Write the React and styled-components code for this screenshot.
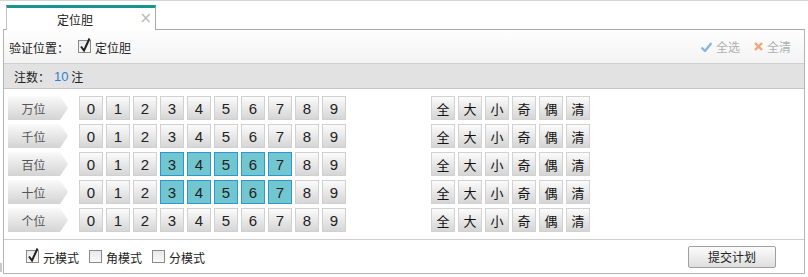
import styled, { createGlobalStyle } from "styled-components";

const GlobalStyle = createGlobalStyle`
  body {
    margin: 0;
    background: #fff;
    font-family: "Noto Sans CJK SC", "Liberation Sans", sans-serif;
  }
`;

const POSITIONS = ["万位", "千位", "百位", "十位", "个位"];
const DIGITS = [0, 1, 2, 3, 4, 5, 6, 7, 8, 9];
const QUICK = ["全", "大", "小", "奇", "偶", "清"];
const SELECTED = { 百位: [3, 4, 5, 6, 7], 十位: [3, 4, 5, 6, 7] };

const CheckBox = ({ checked }) => (
  <svg width="16" height="16" viewBox="0 0 16 16">
    <defs>
      <linearGradient id="cbg" x1="0" y1="0" x2="0" y2="1">
        <stop offset="0" stopColor="#e8e8e8" />
        <stop offset="1" stopColor="#fafafa" />
      </linearGradient>
    </defs>
    <rect x="0.5" y="2.5" width="12" height="12" fill="url(#cbg)" stroke="#8a8a8a" />
    {checked && (
      <path d="M3 8.5 L6 12.5 L11.5 0.5" fill="none" stroke="#222" strokeWidth="2" />
    )}
  </svg>
);

const App = () => {
  return (
    <Page>
      <GlobalStyle />
      <TabBar>
        <Tab>
          <TabTitle>定位胆</TabTitle>
          <TabClose>×</TabClose>
        </Tab>
      </TabBar>

      <Panel>
        <Toolbar>
          <CheckLabel>
            验证位置：
            <CheckItem $offset={9}>
              <CheckBox checked />
              定位胆
            </CheckItem>
          </CheckLabel>
          <ToolActions>
            <ToolAction>
              <svg width="11" height="10" viewBox="0 0 11 10">
                <path d="M0.5 5.5 L4 9 L10.5 1" fill="none" stroke="#86b8de" strokeWidth="2.4" />
              </svg>
              全选
            </ToolAction>
            <ToolAction>
              <svg width="9" height="9" viewBox="0 0 9 9">
                <path d="M1 1 L8 8 M8 1 L1 8" stroke="#f2a37a" strokeWidth="2.4" />
              </svg>
              全清
            </ToolAction>
          </ToolActions>
        </Toolbar>

        <CountBar>
          注数：<Count>10</Count>&nbsp;注
        </CountBar>

        <Board>
          {POSITIONS.map((pos) => (
            <BallRow key={pos}>
              <PosLabel>{pos}</PosLabel>
              <Balls>
                {DIGITS.map((d) => (
                  <Ball key={d} $active={(SELECTED[pos] || []).includes(d)}>
                    {d}
                  </Ball>
                ))}
              </Balls>
              <QuickGroup>
                {QUICK.map((q) => (
                  <QuickBtn key={q}>{q}</QuickBtn>
                ))}
              </QuickGroup>
            </BallRow>
          ))}
        </Board>

        <Footer>
          <Modes>
            <CheckItem>
              <CheckBox checked />
              元模式
            </CheckItem>
            <CheckItem>
              <CheckBox />
              角模式
            </CheckItem>
            <CheckItem>
              <CheckBox />
              分模式
            </CheckItem>
          </Modes>
          <SubmitBtn>提交计划</SubmitBtn>
        </Footer>
      </Panel>
      <SideGrip />
    </Page>
  );
};

export default App;

const Page = styled.div`
  position: relative;
  width: 808px;
  height: 277px;
  overflow: hidden;
  background: #fff;
  border-top: 1px solid #d4d4d4;
  box-sizing: border-box;
`;

const TabBar = styled.div`
  display: flex;
  align-items: flex-end;
  height: 28px;
  padding-left: 6px;
`;

const Tab = styled.div`
  position: relative;
  z-index: 1;
  width: 150px;
  height: 25px;
  margin-bottom: -1px;
  padding-right: 12px;
  box-sizing: border-box;
  border-top: 3px solid #17958f;
  border-left: 1px solid #c4c4c4;
  border-right: 1px solid #a8a8a8;
  background: #fff;
  display: flex;
  align-items: center;
  justify-content: center;
`;

const TabTitle = styled.span`
  font-size: 12px;
  color: #222;
  margin-top: 1px;
`;

const TabClose = styled.span`
  position: absolute;
  right: 3px;
  top: 1px;
  font-family: "DejaVu Sans", sans-serif;
  font-size: 15px;
  line-height: 18px;
  color: #b8b8b8;
`;

const Panel = styled.div`
  margin-left: 3px;
  width: 802px;
  box-sizing: border-box;
  border: 1px solid #b4b4b4;
  border-top-color: #a8a8a8;
`;

const Toolbar = styled.div`
  height: 33px;
  display: flex;
  align-items: center;
  justify-content: space-between;
  padding: 0 13px 0 5px;
  background: linear-gradient(#fefefe, #f3f3f3);
  border-bottom: 1px solid #cfcfcf;
`;

const CheckLabel = styled.div`
  display: flex;
  align-items: center;
  font-size: 12px;
  color: #222;
  padding-top: 1px;
`;

const CheckItem = styled.span`
  display: inline-flex;
  align-items: center;
  gap: 1px;
  margin-left: ${(p) => p.$offset || 0}px;
  font-size: 12px;
  color: #222;

  svg {
    margin-top: -3px;
  }
`;

const ToolActions = styled.div`
  display: flex;
  gap: 14px;
`;

const ToolAction = styled.span`
  display: inline-flex;
  align-items: center;
  gap: 4px;
  font-size: 12px;
  color: #b0b0b0;
`;

const CountBar = styled.div`
  height: 24px;
  display: flex;
  align-items: center;
  padding-left: 10px;
  background: #e2e2e2;
  border-bottom: 1px solid #c6c6c6;
  font-size: 12px;
  color: #222;
`;

const Count = styled.span`
  margin-left: 4px;
  color: #2f7fd6;
  font-family: "Liberation Sans", sans-serif;
  font-size: 13px;
`;

const Board = styled.div`
  display: flex;
  flex-direction: column;
  gap: 4px;
  padding: 7px 0 7px 4px;
  border-bottom: 1px solid #cfcfcf;
`;

const BallRow = styled.div`
  display: flex;
  align-items: center;
  height: 24px;
`;

const PosLabel = styled.div`
  width: 60px;
  height: 24px;
  box-sizing: border-box;
  padding-right: 9px;
  display: flex;
  align-items: center;
  justify-content: center;
  font-size: 12px;
  color: #555;
  background: linear-gradient(#fafafa, #d3d3d3);
  clip-path: polygon(0 0, 52px 0, 60px 50%, 52px 100%, 0 100%);
`;

const Balls = styled.div`
  display: flex;
  gap: 3px;
  margin-left: 11px;
`;

const Ball = styled.div`
  width: 24px;
  height: 24px;
  box-sizing: border-box;
  display: flex;
  align-items: center;
  justify-content: center;
  font-family: "Liberation Sans", sans-serif;
  font-size: 15px;
  color: #222;
  border: 1px solid ${(p) => (p.$active ? "#2a98d6" : "#d0d0d0")};
  background: ${(p) =>
    p.$active ? "#72c6cf" : "linear-gradient(#fbfbfb, #d6d6d6)"};
`;

const QuickGroup = styled.div`
  display: flex;
  gap: 3px;
  margin-left: 85px;
`;

const QuickBtn = styled.div`
  width: 24px;
  height: 24px;
  box-sizing: border-box;
  display: flex;
  align-items: center;
  justify-content: center;
  font-size: 13px;
  color: #111;
  border: 1px solid #d2d2d2;
  background: linear-gradient(#fbfbfb, #d5d5d5);
`;

const Footer = styled.div`
  height: 33px;
  display: flex;
  align-items: center;
  justify-content: space-between;
  padding: 0 28px 0 22px;
`;

const Modes = styled.div`
  display: flex;
  gap: 10px;
  padding-top: 2px;
`;

const SubmitBtn = styled.div`
  width: 88px;
  height: 22px;
  box-sizing: border-box;
  display: flex;
  align-items: center;
  justify-content: center;
  font-size: 12px;
  color: #222;
  border: 1px solid #9f9f9f;
  border-radius: 2px;
  background: linear-gradient(#fcfcfc, #dedede);
`;

const SideGrip = styled.div`
  position: absolute;
  left: 0;
  top: 262px;
  width: 2px;
  height: 9px;
  background: #c8c8c8;
`;
